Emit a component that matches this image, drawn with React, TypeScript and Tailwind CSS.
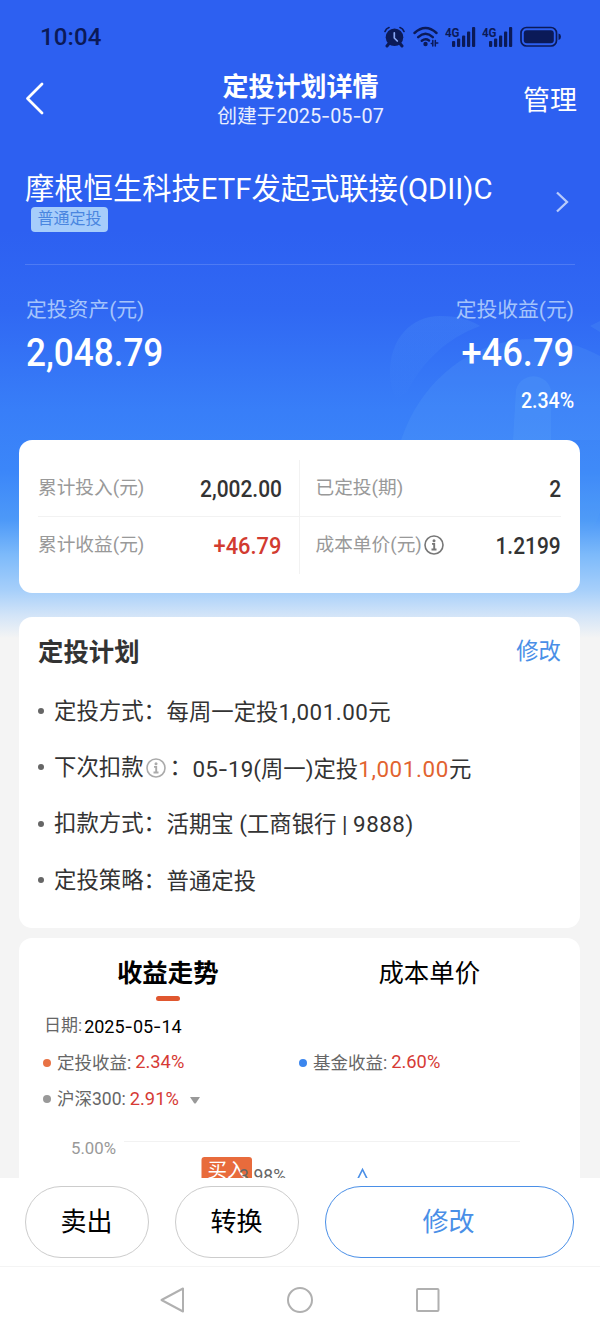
import React from "react";

const Txt = ({ children }: { children: string }) => (
  <>
    {children.split(/(-)/).map((part, i) =>
      part === "-" ? (
        <span key={i} className="font-[Inter]">-</span>
      ) : (
        part
      ),
    )}
  </>
);

const Signal = () => (
  <svg width="32" height="22" viewBox="0 0 32 22" fill="currentColor">
    <text x="0" y="10.500" fontSize="13.500" fontWeight="700" fontFamily="Roboto" textLength="14.500" lengthAdjust="spacingAndGlyphs">4G</text>
    <rect x="7" y="15" width="3.200" height="6" rx="1" />
    <rect x="12" y="12.500" width="3.200" height="8.500" rx="1" />
    <rect x="17" y="9.500" width="3.200" height="11.500" rx="1" />
    <rect x="22" y="5.500" width="3.200" height="15.500" rx="1" />
    <rect x="27" y="1" width="3.200" height="20" rx="1" />
  </svg>
);

const StatusBar = () => (
  <div className="flex h-[54px] items-end justify-between pr-[38px] pb-[6px] pl-[40px] text-[#0b1a58]">
    <span className="h-[23px] text-[24px] leading-[24px] font-medium tracking-[0.1px]">10:04</span>
    <div className="flex h-[22px] items-center">
      <svg className="mr-[8px]" width="21" height="22" viewBox="0 0 21 22">
        <g stroke="currentColor" strokeLinecap="round" fill="none">
          <path d="M1 5.500Q2 2.500 5 1.500M20 5.500Q19 2.500 16 1.500" strokeWidth="1.700" />
          <path d="M5 17.500L3 20M16 17.500L18 20" strokeWidth="3" />
        </g>
        <circle cx="10.500" cy="11.300" r="8.800" fill="currentColor" />
        <path d="M10.300 6.800V12L13.300 15" stroke="#88a6f2" strokeWidth="1.700" fill="none" strokeLinecap="round" />
      </svg>
      <svg className="mr-[6px]" width="26" height="22" viewBox="0 0 26 22" fill="none" stroke="currentColor" strokeWidth="2.400" strokeLinecap="round">
        <path d="M1.500 7Q12.500 -3 23.500 7M5.200 11.200Q12.500 4.500 19.800 11.200M8.800 14.800Q12.500 12 16 14.500" />
        <circle cx="12.500" cy="18" r="2.200" fill="currentColor" stroke="none" />
        <path d="M19.800 14.500V20M22.300 14.500V20M18.300 17.500h1.500M22.300 17h2.500" strokeWidth="1.500" />
      </svg>
      <span className="mr-[5px]"><Signal /></span>
      <span className="mr-[6px]"><Signal /></span>
      <svg width="42" height="22" viewBox="0 0 42 22">
        <rect x="1" y="1.500" width="35.500" height="18.500" rx="5.500" fill="none" stroke="currentColor" strokeWidth="1.700" />
        <rect x="3.800" y="4.300" width="30" height="13" rx="3" fill="currentColor" />
        <path d="M38.500 7.500Q41 8 41 10.800T38.500 14Z" fill="currentColor" />
      </svg>
    </div>
  </div>
);

const Info = ({ className }: { className: string }) => (
  <svg className={className} width="20" height="20" viewBox="0 0 20 20" fill="none" stroke="currentColor">
    <circle cx="10" cy="10" r="9" strokeWidth="1.600" />
    <circle cx="10" cy="5.800" r="1.500" fill="currentColor" stroke="none" />
    <path d="M8 8.900h2.200v5.500M7.500 14.500h5" strokeWidth="1.900" />
  </svg>
);

const Stat = ({ label, value, info, valueClass }: { label: string; value: string; info?: boolean; valueClass: string }) => (
  <div className="flex h-[57px] items-center justify-between">
    <span className="flex items-center text-[18.700px] text-[#999]">
      {label}
      {info && <Info className="ml-[2px] text-[#777]" />}
    </span>
    <span className={valueClass}>{value}</span>
  </div>
);

const PlanRow = ({ label, info, children }: { label: string; info?: boolean; children: React.ReactNode }) => (
  <li className="flex h-[56.300px] items-center">
    <span className="mr-[10px] size-[6px] rounded-full bg-[#666]" />
    <span className="flex items-center pt-[1px]">
      {label}
      {info && <Info className="mr-[4px] ml-[2px] text-[#aaa]" />}
      <span className="w-[23px]">：</span>
    </span>
    <span className="pt-[3px] whitespace-pre">{children}</span>
  </li>
);

const Legend = ({ dot, label, value, children }: { dot: string; label: string; value: string; children?: React.ReactNode }) => (
  <div className="flex items-center">
    <span className={dot} />
    <span className="pt-[1px] text-[17.500px] text-[#666]">{label}:</span>
    <span className="ml-[4px] pb-[1px] text-[18.300px] text-[#d63a35]">{value}</span>
    {children}
  </div>
);

export default function App() {
  return (
    <div className="flex h-[1332px] w-[600px] flex-col overflow-hidden bg-[#f4f4f4] font-[Roboto,'Noto_Sans_CJK_SC',sans-serif]">
      <div className="relative h-[1178px] shrink-0 overflow-hidden">
        <div className="absolute inset-x-0 top-0 h-[640px] bg-[linear-gradient(180deg,#2d60f1_0px,#2d60f1_230px,#3068f3_310px,#387ef8_410px,#3b86f9_470px,#4d99f8_520px,#7dbafa_555px,#a6cffa_590px,#d2e4f8_615px,#f4f4f4_638px)]">
          <svg width="600" height="640" viewBox="0 0 600 640" fill="#63acf8">
            <defs>
              <linearGradient id="leaf" x1="0" y1="0" x2="0" y2="1">
                <stop offset="0" stopColor="#63acf8" stopOpacity=".17" />
                <stop offset="1" stopColor="#63acf8" stopOpacity="0" />
              </linearGradient>
            </defs>
            <path d="M390 375C389 338 412 316 440 316C460 316 470 320 480 326C447 338 423 361 407 392L396 400Q391 390 390 375Z" fill="url(#leaf)" />
            <path d="M590 326L600 321V332Z" opacity=".16" />
            <path d="M401 440C423 375 477 339 533 339C560 339 582 346 600 356V440Z" opacity=".17" />
            <path d="M513 440L516 390A18 18 0 0 1 551 390V440Z" opacity=".18" />
            <path d="M580 440H600V510Q597 531 580 531Z" opacity=".1" />
          </svg>
        </div>

        <div className="relative">
          <StatusBar />
          <header className="grid h-[91px] grid-cols-[1fr_auto_1fr] items-center pr-[23px] pl-[24px] text-white">
            <svg className="mb-[3px]" width="22" height="34" viewBox="0 0 22 34" fill="none" stroke="currentColor" strokeWidth="2.800" strokeLinecap="round" strokeLinejoin="round">
              <path d="M18 3L3.500 17.500L18 32" />
            </svg>
            <div className="text-center">
              <h1 className="pt-[2px] text-[26px] leading-[32px] font-bold">定投计划详情</h1>
              <p className="text-[19.800px] leading-[26px] text-white/90"><Txt>创建于2025-05-07</Txt></p>
            </div>
            <span className="justify-self-end pt-[4px] text-[27px]">管理</span>
          </header>

          <section className="mx-[25px] flex h-[120px] items-center justify-between border-b border-white/15 pb-[5px] text-white">
            <div>
              <h2 className="text-[29.300px] leading-[35px]">摩根恒生科技ETF发起式联接(QDII)C</h2>
              <span className="ml-[6px] flex h-[25px] w-[77px] items-center justify-center rounded-[4px] bg-[#a6cdfb] pb-[1px] text-[16px] text-[#4a86e0]">普通定投</span>
            </div>
            <svg className="mr-[5px]" width="16" height="24" viewBox="0 0 16 24" fill="none" stroke="#b8cbfb" strokeWidth="2.300">
              <path d="M3 2.500L13 12L3 21.500" />
            </svg>
          </section>

          <section className="flex h-[175px] justify-between px-[26px] pt-[29px] text-white">
            <div>
              <div className="text-[20.800px] leading-[32px] text-[#a5c4fb]">定投资产(元)</div>
              <div className="origin-left scale-x-90 text-[39px] leading-[54px] font-medium">2,048.79</div>
            </div>
            <div className="text-right">
              <div className="text-[20.800px] leading-[32px] text-[#a5c4fb]">定投收益(元)</div>
              <div className="origin-right scale-x-93 text-[39px] leading-[54px] font-medium">+46.79</div>
              <div className="origin-right scale-x-87 text-[22.500px] leading-[40px] font-medium">2.34%</div>
            </div>
          </section>

          <section className="mr-[20px] ml-[19px] grid h-[153px] grid-cols-2 rounded-[13px] bg-white px-[19px] pt-[20px] pb-[19px]">
            <div className="border-r border-[#f2f2f2] pr-[17px]">
              <Stat label="累计投入(元)" value="2,002.00" valueClass="origin-right scale-x-91 pt-[3px] text-[23px] font-medium text-[#333]" />
              <div className="-mt-px -mr-[17px] border-t border-[#f2f2f2]" />
              <Stat label="累计收益(元)" value="+46.79" valueClass="origin-right scale-x-95 pt-[3px] text-[23px] font-medium text-[#d23b30]" />
            </div>
            <div className="pl-[16px]">
              <Stat label="已定投(期)" value="2" valueClass="origin-right scale-x-91 pt-[3px] text-[23px] font-medium text-[#333]" />
              <div className="-mt-px -ml-[16px] border-t border-[#f2f2f2]" />
              <Stat label="成本单价(元)" info value="1.2199" valueClass="origin-right scale-x-91 pt-[3px] text-[23px] font-medium text-[#333]" />
            </div>
          </section>

          <section className="mr-[20px] ml-[19px] mt-[24px] h-[311px] rounded-[13px] bg-white px-[19px] pt-[15px] text-[#333]">
            <div className="flex h-[40px] items-center justify-between">
              <h3 className="text-[25.400px] font-bold">定投计划</h3>
              <span className="text-[22.400px] text-[#4a8fe7]">修改</span>
            </div>
            <ul className="mt-[11px] text-[22.400px]">
              <PlanRow label="定投方式">每周一定投<span className="tracking-[0.5px]">1,001.00</span>元</PlanRow>
              <PlanRow label="下次扣款" info>
                <Txt>05-19(周一)定投</Txt><span className="tracking-[0.600px] text-[#e2632f]">1,001.00</span>元
              </PlanRow>
              <PlanRow label="扣款方式">活期宝 (工商银行 | <span className="tracking-[0.500px]">9888)</span></PlanRow>
              <PlanRow label="定投策略">普通定投</PlanRow>
            </ul>
          </section>

          <section className="mr-[20px] ml-[19px] mt-[10px] h-[260px] rounded-t-[13px] bg-white">
            <div className="grid h-[70px] grid-cols-2 pt-[16px] pr-[20px] pl-[18px] text-center text-[25.400px] leading-[38px] text-black">
              <div className="flex flex-col items-center font-bold">
                收益走势
                <span className="mt-[4px] h-[4.500px] w-[24px] rounded-full bg-[#e0572f]" />
              </div>
              <div>成本单价</div>
            </div>
            <div className="flex h-[36px] items-center pl-[25px] text-[17px] text-[#666]">
              日期:<span className="ml-[2px] text-[18px] text-black"><Txt>2025-05-14</Txt></span>
            </div>
            <div className="grid h-[37px] grid-cols-[256px_1fr] items-center pl-[24px]">
              <Legend dot="mr-[6px] size-[8px] rounded-full bg-[#e87244]" label="定投收益" value="2.34%" />
              <Legend dot="mr-[6px] size-[8px] rounded-full bg-[#3b86ee]" label="基金收益" value="2.60%" />
            </div>
            <div className="flex h-[36px] items-center pl-[24px]">
              <Legend dot="mr-[6px] size-[8px] rounded-full bg-[#999]" label="沪深300" value="2.91%">
                <svg className="mt-[3px] ml-[11px]" width="10" height="7" viewBox="0 0 10 7"><path d="M0 0H10L6 6Q5 7 4 6Z" fill="#999" /></svg>
              </Legend>
            </div>
            <svg width="561" height="81" viewBox="0 -1 561 81">
              <path d="M105 23.500H501" stroke="#f2f2f2" />
              <text x="52" y="36" fontSize="16.500" fill="#999" textLength="45" lengthAdjust="spacingAndGlyphs">5.00%</text>
              <rect x="182.500" y="39" width="50.500" height="30" rx="3" fill="#e86b3c" />
              <text x="188.500" y="59" fontSize="19.500" fill="#fff">买入</text>
              <text x="220" y="64" fontSize="17.500" fill="#666" textLength="47">3.98%</text>
              <path d="M338.500 61.500L343.500 51.500L348.500 61.500" fill="none" stroke="#4a8fe7" strokeWidth="1.600" />
            </svg>
          </section>
        </div>
      </div>

      <div className="flex h-[89px] shrink-0 gap-[26px] border-b border-[#f4f4f4] bg-white pt-[8px] pr-[26px] pl-[25px] text-[26px]">
        <button className="h-[72px] w-[124px] rounded-full border border-[#ccc] pr-[1px] pt-[1px] text-black">卖出</button>
        <button className="h-[72px] w-[124px] rounded-full border border-[#ccc] pr-[1px] pt-[1px] text-black">转换</button>
        <button className="h-[72px] flex-1 rounded-full border border-[#4a8fe7] pr-[2px] pt-[1px] text-[#4a8fe7]">修改</button>
      </div>
      <nav className="flex h-[65px] shrink-0 items-center justify-center gap-[100px] bg-white text-[#b0b0b0]">
        <svg width="28" height="28" viewBox="0 0 28 28" fill="none" stroke="currentColor" strokeWidth="2" strokeLinejoin="round"><path d="M25 2.500V25.500L3.500 14Z" /></svg>
        <svg width="28" height="28" viewBox="0 0 28 28" fill="none" stroke="currentColor" strokeWidth="2"><circle cx="14" cy="14" r="12" /></svg>
        <svg width="28" height="28" viewBox="0 0 28 28" fill="none" stroke="currentColor" strokeWidth="2"><rect x="3" y="3" width="21.500" height="22" rx="1" /></svg>
      </nav>
    </div>
  );
}
